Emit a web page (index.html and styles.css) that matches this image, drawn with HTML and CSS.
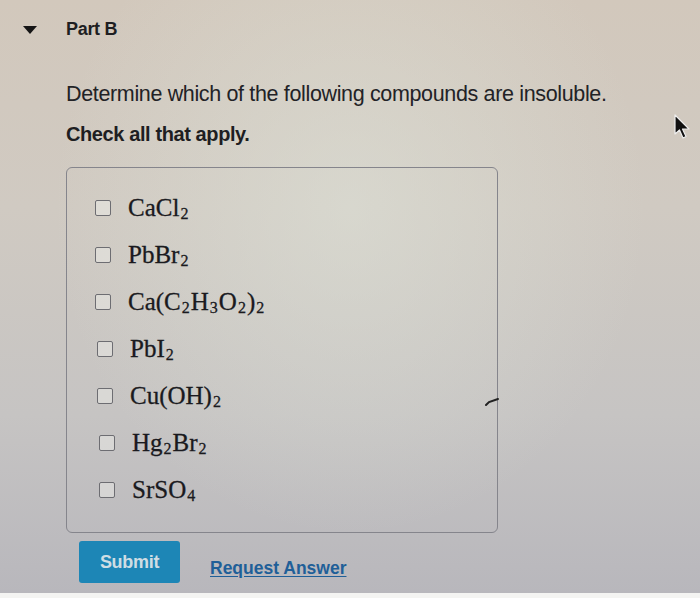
FILE: index.html
```html
<!DOCTYPE html>
<html lang="en">
<head>
  <meta charset="UTF-8">
  <title>Part B</title>
  <link rel="stylesheet" href="styles.css">
</head>
<body>
  <div class="screen">
    <div class="part-header">
      <span class="caret"></span>
      <h2 class="part-title">Part B</h2>
    </div>

    <div class="question">
      <p class="prompt">Determine which of the following compounds are insoluble.</p>
      <p class="hint">Check all that apply.</p>

      <div class="choices">
        <label class="choice"><span class="box"></span><span class="formula">CaCl<sub>2</sub></span></label>
        <label class="choice"><span class="box"></span><span class="formula">PbBr<sub>2</sub></span></label>
        <label class="choice"><span class="box"></span><span class="formula">Ca(C<sub>2</sub>H<sub>3</sub>O<sub>2</sub>)<sub>2</sub></span></label>
        <label class="choice"><span class="box"></span><span class="formula">PbI<sub>2</sub></span></label>
        <label class="choice"><span class="box"></span><span class="formula">Cu(OH)<sub>2</sub></span></label>
        <label class="choice"><span class="box"></span><span class="formula">Hg<sub>2</sub>Br<sub>2</sub></span></label>
        <label class="choice"><span class="box"></span><span class="formula">SrSO<sub>4</sub></span></label>
        <!-- stray pen mark on the panel edge -->
        <svg class="mark" width="14" height="10" viewBox="0 0 14 10"><path d="M1 8 L4 5 L13 2" stroke="#222" stroke-width="2" fill="none" stroke-linecap="round"/></svg>
      </div>

      <div class="actions">
        <button class="submit-btn">Submit</button>
        <a class="request-link" href="#">Request Answer</a>
      </div>
    </div>

    <!-- mouse pointer -->
    <svg class="pointer" width="18" height="27" viewBox="0 0 18 27">
      <path d="M2 1 L2 20 L6.5 16 L10 24 L13 22.5 L9.5 15 L16 15 Z" fill="#111" stroke="#eee" stroke-width="1.2" stroke-linejoin="round"/>
    </svg>
  </div>
  <div class="screen-edge"></div>
</body>
</html>
```

FILE: styles.css
```css
body {
  margin: 0;
  font-family: "Liberation Sans", Arial, sans-serif;
  color: #1e1e22;
}

.screen {
  position: relative;
  height: 593px;
  padding-left: 23px;
  box-sizing: border-box;
  background:
    radial-gradient(ellipse at 50% 35%, rgba(222, 226, 216, 0.55), rgba(222, 226, 216, 0) 60%),
    linear-gradient(180deg, #d2c8bc 0%, #d0cac2 35%, #c6c4c3 70%, #b8b7bc 100%);
}

.screen-edge {
  height: 5px;
  background: #f4f4f2;
}

.part-header {
  display: flex;
  align-items: center;
  padding-top: 19px;
  height: 20px;
}

.caret {
  width: 0;
  height: 0;
  border-left: 7px solid transparent;
  border-right: 7px solid transparent;
  border-top: 8px solid #151515;
  margin-right: 29px;
  margin-top: 1px;
}

.part-title {
  margin: 0;
  font-size: 18px;
  font-weight: bold;
  letter-spacing: -0.3px;
}

.question {
  padding-left: 43px;
}

.prompt {
  margin: 43px 0 0;
  font-size: 21.5px;
  letter-spacing: -0.35px;
  color: #222226;
}

.hint {
  margin: 16px 0 0;
  font-size: 20px;
  font-weight: bold;
  letter-spacing: -0.4px;
}

.choices {
  position: relative;
  margin-top: 21px;
  width: 432px;
  height: 366px;
  box-sizing: border-box;
  border: 1.5px solid #85858c;
  border-radius: 6px;
  padding: 20px 0 0 28px;
  display: flex;
  flex-direction: column;
  gap: 6.5px;
}

.choice {
  display: flex;
  align-items: center;
  height: 40.5px;
}

.choice:nth-child(n+4) { padding-left: 2px; }
.choice:nth-child(n+6) { padding-left: 4px; }

.box {
  width: 14px;
  height: 14px;
  border: 1.5px solid #6d6d72;
  border-radius: 2px;
  background: rgba(235, 235, 232, 0.5);
  margin-right: 17px;
}

.formula {
  font-family: "Liberation Serif", "Times New Roman", serif;
  font-size: 25px;
  color: #1a1a1e;
  -webkit-text-stroke: 0.3px #1a1a1e;
}

.formula sub {
  font-size: 16px;
  vertical-align: -3px;
  line-height: 0;
  margin: 0 1px;
}

.mark {
  position: absolute;
  left: 418px;
  top: 229px;
}

.actions {
  display: flex;
  align-items: center;
  margin-top: 8px;
  padding-left: 13px;
}

.submit-btn {
  width: 101px;
  height: 42px;
  border: none;
  border-radius: 3px;
  background: #1d86b6;
  color: #cfdde4;
  font-family: "Liberation Sans", Arial, sans-serif;
  font-size: 18px;
  font-weight: bold;
  letter-spacing: -0.3px;
  padding: 0;
}

.request-link {
  margin-left: 30px;
  margin-top: 12px;
  font-size: 17.5px;
  font-weight: bold;
  color: #1f5f98;
  text-decoration: underline;
  text-underline-offset: 2px;
}

.pointer {
  position: absolute;
  left: 673px;
  top: 114px;
}
```
